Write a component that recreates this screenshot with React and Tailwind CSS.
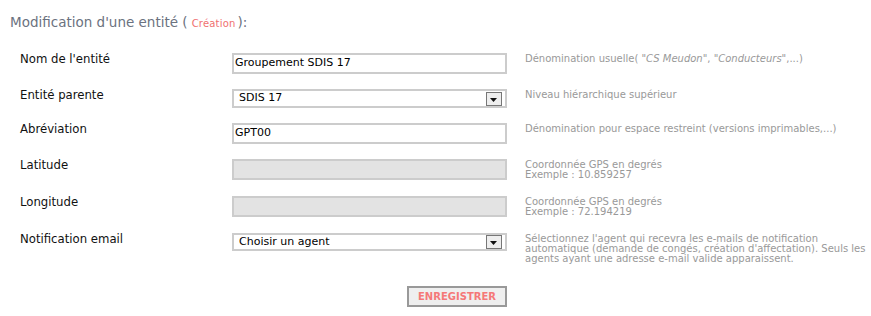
import React from "react";

const labelFont = { fontFamily: '"DejaVu Sans Condensed", "DejaVu Sans", sans-serif' };

function Arrow() {
  return (
    <div className="absolute right-[3px] top-1/2 -translate-y-1/2 w-[16px] h-[14px] bg-[#eeeeee] border border-[#777] flex items-center justify-center">
      <svg width="8" height="5" viewBox="0 0 8 5" className="mt-[3px]">
        <polygon points="0,0 7,0 3.5,4" fill="#111" />
      </svg>
    </div>
  );
}

function Input({ value, disabled }) {
  return (
    <div
      className={`w-[275px] h-[21px] border-2 border-[#cccccc] ${disabled ? "bg-[#e3e3e3]" : "bg-white"} flex items-center pl-[1px] text-[11px] text-black`}
    >
      {value}
    </div>
  );
}

function Select({ value, h = 19 }) {
  return (
    <div
      className="relative w-[275px] border-2 border-[#cccccc] bg-white flex items-center pl-[5px] text-[11px] text-black"
      style={{ height: h }}
    >
      {value}
      <Arrow />
    </div>
  );
}

function Row({ label, children, help, h }) {
  return (
    <div className="flex items-start" style={{ height: h }}>
      <div className="w-[232px] shrink-0 pl-[20px] text-[13px] leading-[16px] text-[#111] -mt-[2px]" style={labelFont}>
        {label}
      </div>
      <div className="w-[275px] shrink-0">{children}</div>
      <div className="ml-[18px] w-[346px] shrink-0 text-[10px] leading-[10px] text-[#999] pt-[1px]">{help}</div>
    </div>
  );
}

export default function App() {
  return (
    <div className="w-[871px] h-[316px] bg-white" style={{ fontFamily: '"DejaVu Sans", Verdana, sans-serif' }}>
      <div className="pt-[13px] pl-[10px] text-[13.5px] leading-[18px] text-[#6b7280] whitespace-nowrap">
        Modification d'une entité (
        <span className="text-[10px] text-[#f07070] ml-[4px] mr-[2px] tracking-[0.2px]">Création</span>
        ):
      </div>
      <div className="mt-[20px]">
        <Row
          h={36}
          label="Nom de l'entité"
          help={
            <span>
              Dénomination usuelle( "<i>CS Meudon</i>", "<i>Conducteurs</i>",...)
            </span>
          }
        >
          <Input value="Groupement SDIS 17" />
        </Row>
        <Row h={34} label="Entité parente" help="Niveau hiérarchique supérieur">
          <Select value="SDIS 17" />
        </Row>
        <Row h={36} label="Abréviation" help="Dénomination pour espace restreint (versions imprimables,...)">
          <Input value="GPT00" />
        </Row>
        <Row
          h={37}
          label="Latitude"
          help={
            <>
              Coordonnée GPS en degrés
              <br />
              Exemple : 10.859257
            </>
          }
        >
          <Input disabled />
        </Row>
        <Row
          h={37}
          label="Longitude"
          help={
            <>
              Coordonnée GPS en degrés
              <br />
              Exemple : 72.194219
            </>
          }
        >
          <Input disabled />
        </Row>
        <Row
          h={53}
          label="Notification email"
          help="Sélectionnez l'agent qui recevra les e-mails de notification automatique (demande de congés, création d'affectation). Seuls les agents ayant une adresse e-mail valide apparaissent."
        >
          <Select value="Choisir un agent" h={18} />
        </Row>
        <div className="flex">
          <div className="w-[232px] shrink-0" />
          <div className="w-[275px] shrink-0 flex justify-end">
            <button className="w-[100px] h-[21px] bg-[#efefef] border-2 border-[#999999] text-[10px] font-bold text-[#f57878] flex items-center justify-center">
              ENREGISTRER
            </button>
          </div>
        </div>
      </div>
    </div>
  );
}
